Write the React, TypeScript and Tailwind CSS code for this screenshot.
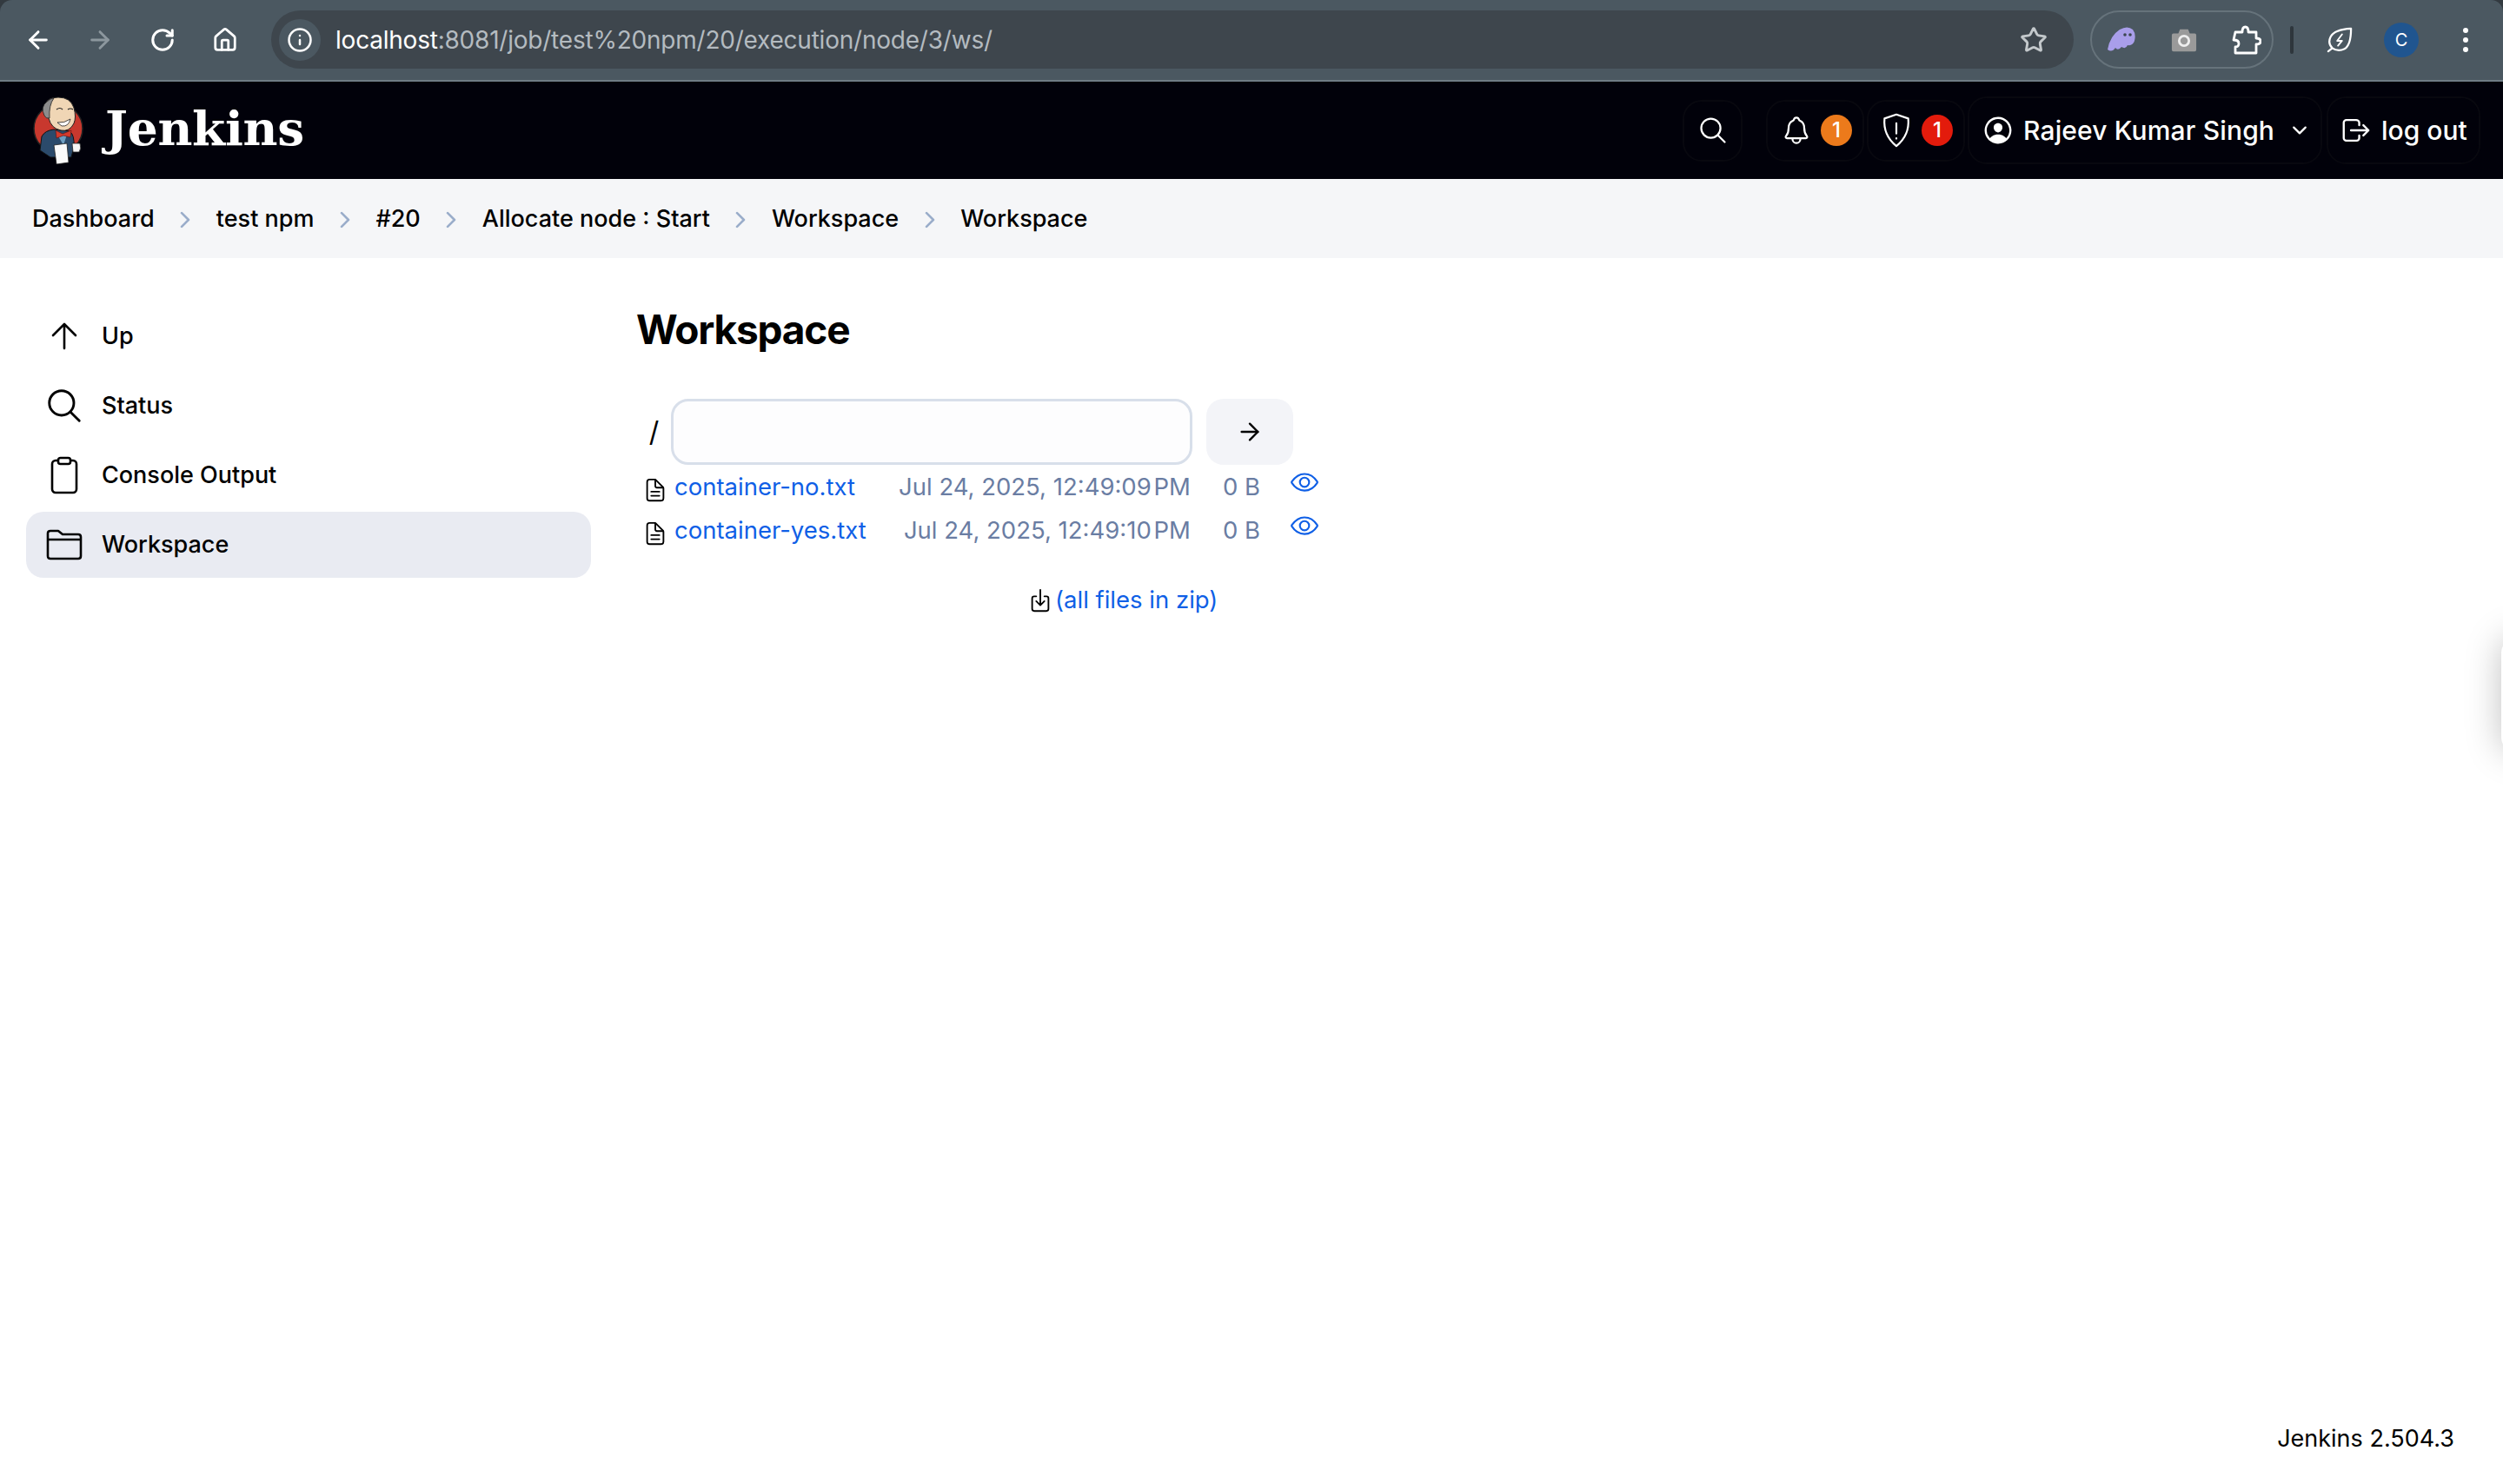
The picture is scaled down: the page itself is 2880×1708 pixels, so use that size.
import {
  IoSearchOutline,
  IoDocumentTextOutline,
  IoEyeOutline,
  IoDownloadOutline,
  IoNotificationsOutline,
  IoPersonCircleOutline,
  IoLogOutOutline,
  IoChevronDown,
  IoChevronForward,
} from "react-icons/io5";
import { ArrowLeft, ArrowRight, RotateCw, Home, Info, Star } from "lucide-react";

const crumbs = ["Dashboard", "test npm", "#20", "Allocate node : Start", "Workspace", "Workspace"];

const files = [
  { name: "container-no.txt", date: "Jul 24, 2025, 12:49:09" },
  { name: "container-yes.txt", date: "Jul 24, 2025, 12:49:10" },
];

function Mascot() {
  return (
    <svg viewBox="0 0 60 78" className="w-[60px] h-[78px] shrink-0">
      <circle cx="29" cy="37" r="28" fill="#c8382e" stroke="#222" strokeWidth="1.5" />
      <path d="M8 62 L10 46 Q14 39 24 38 L42 40 Q48 44 47 58 L44 70 L20 70 Z" fill="#2b4a6b" stroke="#111" strokeWidth="1" />
      <path d="M28 44 L39 44 L35 56 Z" fill="#6d9dc0" />
      <path d="M26 39 L34 43 L44 39 L43 47 L35 45 L27 48 Z" fill="#d33a2c" stroke="#511" strokeWidth="0.6" />
      <path d="M13 12 Q15 1 29 1 Q43 1 47 13 Q50 24 47 31 Q42 41 32 39 Q21 37 18 25 Q12 24 13 12 Z" fill="#f0d6b5" stroke="#222" strokeWidth="1" />
      <path d="M13 22 Q8 12 16 6 Q20 2 24 2 Q18 10 19 25 Q15 26 13 22 Z" fill="#8c8c8c" stroke="#222" strokeWidth="0.8" />
      <path d="M27 15 Q31 12 34 15 M40 15 Q43 13 46 15" stroke="#222" strokeWidth="1.2" fill="none" />
      <path d="M28 30 Q36 31 43 26 Q41 35 33 34 Z" fill="#fff" stroke="#222" strokeWidth="0.8" />
      <path d="M24 56 L39 54 L41 76 L27 78 Z" fill="#fafafa" stroke="#222" strokeWidth="0.8" />
      <path d="M45 54 L54 54 Q56 60 53 64 L46 64 Z" fill="#f6f6f6" stroke="#222" strokeWidth="0.8" />
    </svg>
  );
}

function ShieldAlert() {
  return (
    <svg viewBox="0 0 36 44" className="w-[34px] h-[40px]" fill="none" stroke="#fff" strokeWidth="2.4" strokeLinejoin="round" strokeLinecap="round">
      <path d="M18 2 L33 7 Q35 28 18 42 Q1 28 3 7 Z" />
      <path d="M18 13 L18 26 M18 32 L18 32.5" />
    </svg>
  );
}

function ThinArrowUp() {
  return (
    <svg viewBox="0 0 30 32" className="w-[30px] h-[32px]" fill="none" stroke="#000" strokeWidth="2.6" strokeLinecap="round" strokeLinejoin="round">
      <path d="M15 2 L15 30 M2 15 L15 2 L28 15" />
    </svg>
  );
}

function Clipboard() {
  return (
    <svg viewBox="0 0 32 44" className="w-[32px] h-[44px]" fill="none" stroke="#000" strokeWidth="2.6" strokeLinejoin="round">
      <rect x="2" y="5" width="28" height="37" rx="4" />
      <rect x="9" y="2" width="14" height="7" rx="2.5" fill="#fff" />
    </svg>
  );
}

function Folder() {
  return (
    <svg viewBox="0 0 42 36" className="w-[42px] h-[36px]" fill="none" stroke="#000" strokeWidth="2.6" strokeLinejoin="round">
      <path d="M2 5 Q2 2 5 2 L14 2 L19 6 L37 6 Q40 6 40 9 L40 31 Q40 34 37 34 L5 34 Q2 34 2 31 Z" />
      <path d="M2 12 L40 12" />
    </svg>
  );
}

function Ghost() {
  return (
    <svg viewBox="0 0 34 30" className="w-[34px] h-[30px]">
      <path d="M1 26 Q4 10 15 3 Q24 -2 30 3 Q34 8 32 16 Q30 22 24 21 Q22 26 17 23 Q13 28 10 24 Q6 30 1 26 Z" fill="#a99eea" />
      <circle cx="21" cy="9" r="1.8" fill="#3c4650" />
      <circle cx="27" cy="9" r="1.8" fill="#3c4650" />
    </svg>
  );
}

function Camera() {
  return (
    <svg viewBox="0 0 32 28" className="w-[30px] h-[28px]">
      <path d="M3 6 L9 6 L11 1 L21 1 L23 6 L29 6 Q31 6 31 8 L31 26 Q31 28 29 28 L3 28 Q1 28 1 26 L1 8 Q1 6 3 6 Z" fill="#9a9a9a" />
      <circle cx="16" cy="15" r="6" fill="none" stroke="#eee" strokeWidth="3" />
    </svg>
  );
}

function Puzzle() {
  return (
    <svg viewBox="0 0 34 34" className="w-[34px] h-[34px]" fill="none" stroke="#fff" strokeWidth="2.8" strokeLinejoin="round">
      <path d="M4 8 L12 8 Q12 2 15.500 2 Q19 2 19 8 L28 8 L28 15 Q33 15 33 18.500 Q33 22 28 22 L28 32 L4 32 L4 25 Q8 25 8 21 Q8 17 2 17 Z" />
    </svg>
  );
}

function Leaf() {
  return (
    <svg viewBox="0 0 32 32" className="w-[30px] h-[30px]" fill="none" stroke="#fff" strokeWidth="2.4" strokeLinejoin="round" strokeLinecap="round">
      <path d="M30 2 Q30 22 22 27 Q14 31 7 26 Q1 20 5 12 Q10 3 30 2 Z" />
      <path d="M7 26 L2 30" />
      <path d="M19 9 L13 17 L19 17 L14 23" strokeWidth="2" />
    </svg>
  );
}

export default function App() {
  return (
    <div className="h-[1708px] flex flex-col bg-white overflow-hidden relative font-['Inter',sans-serif] text-black">
      {/* Browser toolbar */}
      <div className="bg-[#333a40] shrink-0">
        <div className="h-[94px] bg-[#4b5861] border-b-2 border-[#6f7d85] rounded-t-[14px] flex items-center pl-[28px] pb-[1px]">
          <ArrowLeft className="w-[32px] h-[32px] text-white mr-[39px]" strokeWidth={2.2} />
          <ArrowRight className="w-[32px] h-[32px] text-[#8c979e] mr-[41px]" strokeWidth={2.2} />
          <RotateCw className="w-[30px] h-[30px] text-white mr-[42px]" strokeWidth={2.4} />
          <Home className="w-[30px] h-[30px] text-white mr-[38px]" strokeWidth={2.2} />
          <div className="h-[67px] w-[2074px] bg-[#3e464d] rounded-full flex items-center pl-[9px] pr-[30px] shrink-0">
            <div className="w-[48px] h-[48px] rounded-full bg-[#4b5861] flex items-center justify-center mr-[17px]">
              <Info className="w-[30px] h-[30px] text-white" strokeWidth={2} />
            </div>
            <span className="text-[28px] text-[#b4bbc0] tracking-[-0.22px]">
              <span className="text-white">localhost</span>:8081/job/test%20npm/20/execution/node/3/ws/
            </span>
            <Star className="w-[32px] h-[32px] text-[#c4c9cc] ml-auto" strokeWidth={2.2} />
          </div>
          <div className="ml-[19px] h-[67px] w-[211px] rounded-full border-2 border-[#66737b] flex items-center justify-between pl-[17px] pr-[12px] shrink-0">
            <Ghost />
            <Camera />
            <Puzzle />
          </div>
          <div className="w-[4px] h-[32px] rounded-full bg-[#2e363c] ml-[19px] mr-[38px] shrink-0" />
          <Leaf />
          <div className="w-[40px] h-[40px] rounded-full bg-[#20558f] text-white text-[20px] flex items-center justify-center ml-[36px] mr-[51px] shrink-0">
            C
          </div>
          <div className="flex flex-col gap-[5px]">
            <span className="w-[6px] h-[6px] rounded-full bg-white" />
            <span className="w-[6px] h-[6px] rounded-full bg-white" />
            <span className="w-[6px] h-[6px] rounded-full bg-white" />
          </div>
        </div>
      </div>

      {/* Jenkins header */}
      <header className="h-[112px] shrink-0 bg-[#01010a] flex items-center pl-[38px] pr-[26px] text-white">
        <Mascot />
        <span className="ml-[23px] -mt-[6px] font-['DejaVu_Serif',serif] font-bold text-[55px] leading-none tracking-[-0.3px]">Jenkins</span>
        <div className="ml-auto flex items-center">
          <div className="w-[69px] h-[71px] rounded-[22px] border-2 border-[#08080f] flex items-center justify-center mr-[27px]">
            <IoSearchOutline className="w-[36px] h-[36px]" />
          </div>
          <div className="w-[113px] h-[71px] rounded-[22px] border-2 border-[#08080f] flex items-center pl-[15px] mr-[3px]">
            <IoNotificationsOutline className="w-[36px] h-[36px]" />
            <span className="ml-[10px] w-[36px] h-[36px] rounded-full bg-[#ec7a1b] flex items-center justify-center text-[24px] font-medium">1</span>
          </div>
          <div className="w-[113px] h-[71px] rounded-[22px] border-2 border-[#08080f] flex items-center pl-[15px] mr-[3px]">
            <ShieldAlert />
            <span className="ml-[12px] w-[36px] h-[36px] rounded-full bg-[#e31b0c] flex items-center justify-center text-[24px] font-medium">1</span>
          </div>
          <div className="w-[408px] h-[78px] rounded-[22px] border-2 border-[#08080f] flex items-center pl-[14px] mr-[5px]">
            <IoPersonCircleOutline className="w-[38px] h-[38px]" />
            <span className="ml-[10px] text-[30px] font-medium tracking-[0.15px] whitespace-nowrap">Rajeev Kumar Singh</span>
            <IoChevronDown className="ml-[17px] w-[24px] h-[24px]" />
          </div>
          <div className="w-[177px] h-[78px] rounded-[22px] border-2 border-[#08080f] flex items-center pl-[13px]">
            <IoLogOutOutline className="w-[38px] h-[38px]" />
            <span className="ml-[10px] text-[30px] font-medium whitespace-nowrap">log out</span>
          </div>
        </div>
      </header>

      {/* Breadcrumbs */}
      <nav className="h-[91px] shrink-0 bg-[#f5f6f8] flex items-center pl-[37px] pt-[2px]">
        {crumbs.map((crumb, i) => (
          <div key={i} className="flex items-center">
            <span className="text-[27px] font-medium whitespace-nowrap">{crumb}</span>
            {i < crumbs.length - 1 && <IoChevronForward className="w-[28px] h-[28px] text-[#9aadca] mx-[21.500px]" />}
          </div>
        ))}
      </nav>

      <main className="flex-1 flex items-start">
        {/* Sidebar */}
        <aside className="w-[650px] ml-[30px] mt-[52px] shrink-0 flex flex-col gap-[4px]">
          <div className="h-[76px] rounded-[20px] flex items-center">
            <div className="w-[87px] flex justify-center">
              <ThinArrowUp />
            </div>
            <span className="text-[27px] font-medium">Up</span>
          </div>
          <div className="h-[76px] rounded-[20px] flex items-center">
            <div className="w-[87px] flex justify-center">
              <IoSearchOutline className="w-[46px] h-[46px]" />
            </div>
            <span className="text-[27px] font-medium">Status</span>
          </div>
          <div className="h-[76px] rounded-[20px] flex items-center">
            <div className="w-[87px] flex justify-center">
              <Clipboard />
            </div>
            <span className="text-[27px] font-medium">Console Output</span>
          </div>
          <div className="h-[76px] rounded-[20px] bg-[#e9ebf2] flex items-center">
            <div className="w-[87px] flex justify-center">
              <Folder />
            </div>
            <span className="text-[27px] font-medium">Workspace</span>
          </div>
        </aside>

        {/* Directory listing */}
        <section className="ml-[52px] mt-[52px] w-[785px] shrink-0">
          <h1 className="text-[46px] font-bold leading-[60px] tracking-[-1.200px]">Workspace</h1>
          <div className="mt-[50px] flex items-center">
            <span className="w-[40px] text-center text-[32px] pl-[1px]">/</span>
            <div className="w-[600px] h-[76px] rounded-[20px] border-[3px] border-[#d8dfea] bg-[#fdfdfe]" />
            <div className="ml-[16px] w-[100px] h-[76px] rounded-[20px] bg-[#f3f4f8] flex items-center justify-center">
              <ArrowRight className="w-[32px] h-[32px]" strokeWidth={1.8} />
            </div>
          </div>
          <div className="mt-[1px] flex flex-col">
            {files.map((f) => (
              <div key={f.name} className="h-[50px] flex items-center text-[27.500px]">
                <IoDocumentTextOutline className="w-[30px] h-[30px] mt-[5px] ml-[7px] mr-[7px] shrink-0" />
                <span className="text-[#0f5fe6] whitespace-nowrap">{f.name}</span>
                <span className="ml-auto text-[#6a7da3] whitespace-nowrap">
                  {f.date} <span className="-ml-[5px]">PM</span>
                </span>
                <span className="ml-[37px] text-[#6a7da3] whitespace-nowrap">0 B</span>
                <IoEyeOutline className="ml-[34px] w-[34px] h-[34px] -mt-[12px] mr-[-1px] text-[#0f5fe6] shrink-0" />
              </div>
            ))}
          </div>
          <div className="mt-[34px] pl-[450px] flex items-center text-[27.500px] text-[#0f5fe6]">
            <IoDownloadOutline className="w-[30px] h-[30px] text-black mr-[2px]" />
            <span className="whitespace-nowrap">(all files in zip)</span>
          </div>
        </section>
      </main>

      <footer className="shrink-0 pr-[56px] pb-[32px] flex justify-end text-[27px] font-normal">Jenkins 2.504.3</footer>

      {/* Side panel peeking in from the right edge */}
      <div className="absolute top-[735px] right-[-96px] w-[98px] h-[130px] rounded-l-[16px] bg-white shadow-[0_0_40px_rgba(0,0,0,0.25)]" />
    </div>
  );
}
